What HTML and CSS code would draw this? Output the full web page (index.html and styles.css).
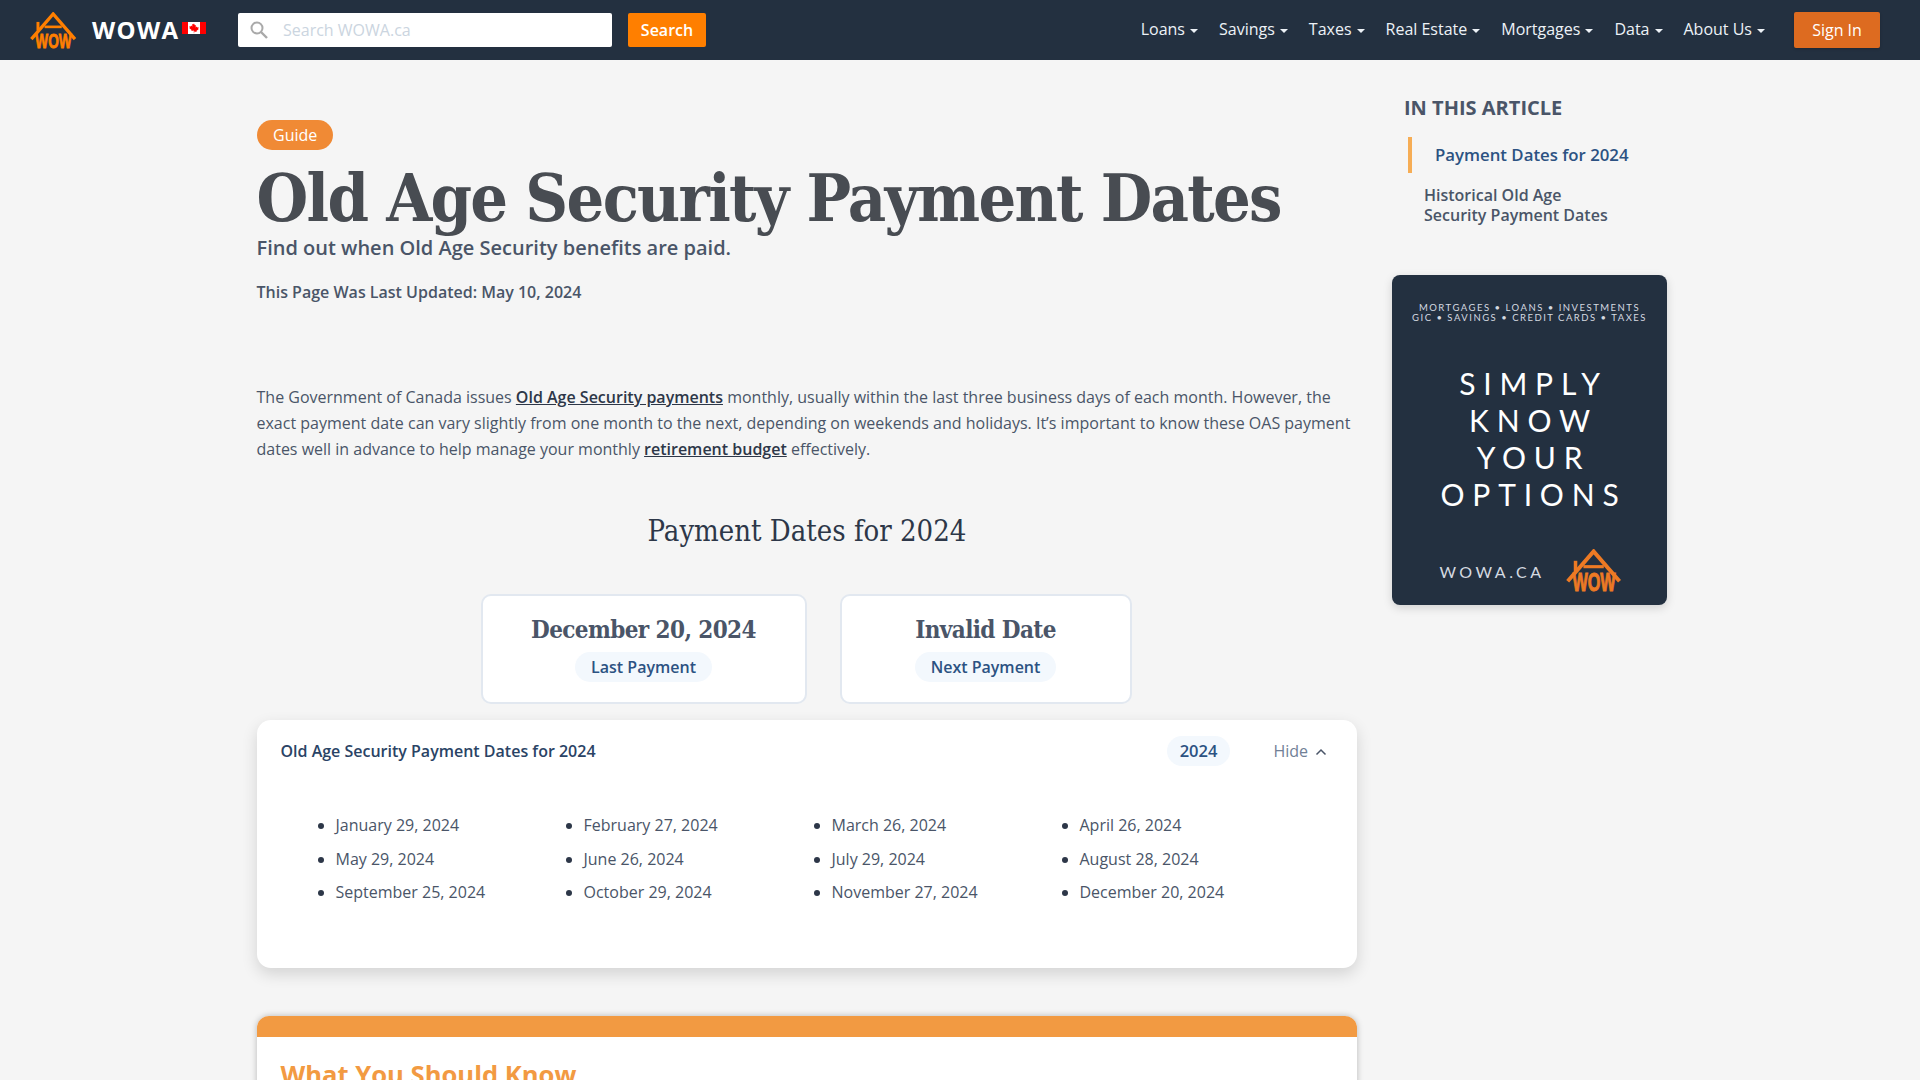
FILE: index.html
```html
<!DOCTYPE html>
<html lang="en">
<head>
<meta charset="utf-8">
<title>Old Age Security Payment Dates</title>
<link rel="stylesheet" href="styles.css">
</head>
<body>
<header class="topbar">
  <div class="brand">
    <svg class="brand-logo" width="47" height="37" viewBox="0 0 142 112">
      <path d="M4 82 L70 6 L136 82" fill="none" stroke="currentColor" stroke-width="10"/>
      <path d="M44 45 H96" fill="none" stroke="currentColor" stroke-width="8"/>
      <path d="M24 30 V56" fill="none" stroke="currentColor" stroke-width="9"/>
      <text x="16" y="108" class="logo-wow" textLength="110" lengthAdjust="spacingAndGlyphs">WOW</text>
    </svg>
    <span class="brand-name">WOWA</span>
    <svg class="flag" width="24" height="12" viewBox="0 0 24 12">
      <rect width="24" height="12" fill="#fff"/>
      <rect width="6" height="12" fill="#f00"/>
      <rect x="18" width="6" height="12" fill="#f00"/>
      <path d="M12 1.600l1 1.900 1-.5-.4 2.400 1.300-1 .4 1 1.400-.2-.5 1.500.6.4-2.400 1.900.2.900-2.400-.3v1.600h-.4V8.600l-2.400.3.2-.9-2.400-1.900.6-.4-.5-1.500 1.400.2.400-1 1.300 1-.4-2.400 1 .5z" fill="#f00"/>
    </svg>
  </div>
  <form class="search">
    <div class="search-box">
      <svg class="search-icon" width="20" height="20" viewBox="0 0 20 20">
        <circle cx="8" cy="8" r="5.500" fill="none" stroke="#a9a9a9" stroke-width="2"/>
        <path d="M12 12l6 6" stroke="#a9a9a9" stroke-width="2.400"/>
      </svg>
      <span class="search-placeholder">Search WOWA.ca</span>
    </div>
    <button class="search-btn" type="button">Search</button>
  </form>
  <nav class="nav">
    <a class="nav-item">Loans<i class="caret"></i></a>
    <a class="nav-item">Savings<i class="caret"></i></a>
    <a class="nav-item">Taxes<i class="caret"></i></a>
    <a class="nav-item">Real Estate<i class="caret"></i></a>
    <a class="nav-item">Mortgages<i class="caret"></i></a>
    <a class="nav-item">Data<i class="caret"></i></a>
    <a class="nav-item">About Us<i class="caret"></i></a>
  </nav>
  <button class="signin" type="button">Sign In</button>
</header>

<div class="page">
  <main class="article">
    <span class="tag">Guide</span>
    <h1 class="title">Old Age Security Payment Dates</h1>
    <p class="subtitle">Find out when Old Age Security benefits are paid.</p>
    <p class="updated">This Page Was Last Updated: May 10, 2024</p>
    <p class="intro">The Government of Canada issues <a class="link">Old Age Security payments</a> monthly, usually within the last three business days of each month. However, the exact payment date can vary slightly from one month to the next, depending on weekends and holidays. It’s important to know these OAS payment dates well in advance to help manage your monthly <a class="link">retirement budget</a> effectively.</p>
    <h2 class="section-title">Payment Dates for 2024</h2>
    <div class="stats">
      <div class="stat stat-last">
        <div class="stat-value">December 20, 2024</div>
        <span class="pill">Last Payment</span>
      </div>
      <div class="stat stat-next">
        <div class="stat-value">Invalid Date</div>
        <span class="pill">Next Payment</span>
      </div>
    </div>
    <section class="dates-card">
      <div class="dates-head">
        <span class="dates-title">Old Age Security Payment Dates for 2024</span>
        <span class="year-pill">2024</span>
        <span class="hide">Hide
          <svg class="chevron" width="12" height="8" viewBox="0 0 12 8"><path d="M1.500 6.500L6 2l4.500 4.500" fill="none" stroke="#4a5568" stroke-width="1.500"/></svg>
        </span>
      </div>
      <ul class="dates-list">
        <li>January 29, 2024</li>
        <li>February 27, 2024</li>
        <li>March 26, 2024</li>
        <li>April 26, 2024</li>
        <li>May 29, 2024</li>
        <li>June 26, 2024</li>
        <li>July 29, 2024</li>
        <li>August 28, 2024</li>
        <li>September 25, 2024</li>
        <li>October 29, 2024</li>
        <li>November 27, 2024</li>
        <li>December 20, 2024</li>
      </ul>
    </section>
    <section class="know-card">
      <div class="know-bar"></div>
      <h3 class="know-title">What You Should Know</h3>
    </section>
  </main>
  <aside class="side">
    <h4 class="toc-title">IN THIS ARTICLE</h4>
    <a class="toc-active">Payment Dates for 2024</a>
    <a class="toc-item">Historical Old Age Security Payment Dates</a>
    <div class="ad">
      <div class="ad-small">MORTGAGES • LOANS • INVESTMENTS<br>GIC • SAVINGS • CREDIT CARDS • TAXES</div>
      <div class="ad-big">SIMPLY<br>KNOW<br>YOUR<br>OPTIONS</div>
      <div class="ad-foot">
        <span class="ad-site">WOWA.CA</span>
        <svg class="ad-logo" width="56" height="44" viewBox="0 0 142 112">
          <path d="M4 82 L70 6 L136 82" fill="none" stroke="currentColor" stroke-width="10"/>
          <path d="M44 45 H96" fill="none" stroke="currentColor" stroke-width="8"/>
          <path d="M24 30 V56" fill="none" stroke="currentColor" stroke-width="9"/>
          <text x="16" y="108" class="logo-wow" textLength="110" lengthAdjust="spacingAndGlyphs">WOW</text>
        </svg>
      </div>
    </div>
  </aside>
</div>
</body>
</html>
```

FILE: styles.css
```css
* { box-sizing: border-box; }
html, body { margin: 0; padding: 0; }
body {
  height: 1080px;
  overflow: hidden;
  background: #f5f5f5;
  font-family: "Open Sans", "Noto Sans", sans-serif;
  font-size: 16px;
  color: #4a5568;
}
.logo-wow {
  font-family: "Liberation Sans", sans-serif; font-weight: 700; font-size: 64px;
  fill: currentColor; stroke: currentColor; stroke-width: 2.500px;
}

.topbar {
  height: 60px;
  background: #233040;
  display: flex;
  align-items: center;
  padding: 0 40px 0 30px;
  color: #fff;
}
.brand { display: flex; align-items: center; width: 208px; }
.brand-logo { display: block; color: #ff7f00; }
.brand-name { margin-left: 15px; font-size: 24px; font-weight: 700; letter-spacing: 1.300px; line-height: 60px; }
.flag { margin-left: 3px; margin-top: -4px; }
.search { display: flex; align-items: center; gap: 16px; }
.search-box {
  width: 374px; height: 34px; background: #fff; border-radius: 2px;
  display: flex; align-items: center; padding-left: 11px;
}
.search-placeholder { margin-left: 14px; color: #cbd5e0; font-size: 16px; }
.search-btn {
  width: 78px; height: 34px; border: 0; border-radius: 2px; background: #ff7f00; color: #fff;
  font: 600 16px "Open Sans", sans-serif; padding: 0;
}
.nav { margin-left: auto; display: flex; gap: 21px; margin-right: 29px; }
.nav-item { font-size: 16px; color: #edf2f7; display: flex; align-items: center; margin-top: -2px; }
.caret {
  display: inline-block; margin-left: 5px; margin-top: 3px;
  border-left: 4px solid transparent; border-right: 4px solid transparent; border-top: 4px solid #edf2f7;
}
.signin {
  width: 86px; height: 36px; border: 0; border-radius: 2px; background: #dd6b20; color: #fff;
  font: 400 16px "Open Sans", sans-serif; padding: 0; box-shadow: 0 1px 3px rgba(0,0,0,.2);
}

.page { display: flex; padding: 0 0 0 257px; }
.article { width: 1100px; padding-top: 60px; }
.tag {
  display: inline-block; height: 30px; line-height: 30px; padding: 0 16px; border-radius: 15px;
  background: #f08a35; color: #fff; font-size: 16px;
}
.title {
  margin: 9px 0 1px -.5px; font-family: "DejaVu Serif", "Liberation Serif", serif; font-stretch: condensed; font-weight: 700;
  font-size: 66px; line-height: 78px; letter-spacing: -1.700px; color: #484c52; white-space: nowrap;
}
.subtitle { margin: -5px 0 0 -.5px; font-size: 20px; font-weight: 600; line-height: 30px; }
.updated { margin: 17px 0 0 -.5px; font-weight: 600; line-height: 24px; }
.intro { margin: 80px 0 0 -.5px; line-height: 26px; color: #4a5568; }
.link { color: #2d3748; font-weight: 600; text-decoration: underline; }
.section-title {
  margin: 49px 0 0; text-align: center; font-family: "DejaVu Serif", "Liberation Serif", serif; font-stretch: condensed;
  font-weight: 400; font-size: 29px; line-height: 40px; color: #2d3748;
}
.stats { display: flex; justify-content: center; gap: 33px; margin-top: 43px; padding-right: 2px; }
.stat {
  height: 110px; background: #fff; border: 2px solid #e2e8f0; border-radius: 10px;
  display: flex; flex-direction: column; align-items: center; padding-top: 17px;
}
.stat-last { width: 326px; }
.stat-next { width: 292px; }
.stat-value {
  font-family: "DejaVu Serif", "Liberation Serif", serif; font-stretch: condensed; font-weight: 700;
  font-size: 24px; line-height: 34px; letter-spacing: -.6px; color: #4a5568;
}
.pill {
  margin-top: 5px; height: 30px; line-height: 30px; padding: 0 16px; border-radius: 15px;
  background: #f3f8fd; color: #2c5282; font-weight: 600; font-size: 16px;
}
.dates-card {
  margin-top: 16px; height: 248px; background: #fff; border-radius: 14px;
  box-shadow: 0 6px 16px rgba(0,0,0,.14); padding: 16px 30px 0 23.500px;
}
.dates-head { display: flex; align-items: center; height: 30px; }
.dates-title { font-weight: 600; color: #2a4365; }
.year-pill {
  margin-left: auto; height: 30px; line-height: 30px; padding: 0 13px; border-radius: 15px;
  background: #f3f8fd; color: #2c5282; font-weight: 600; font-size: 16.500px;
}
.hide { margin-left: 43px; color: #718096; display: flex; align-items: center; gap: 7px; }
.chevron { margin-top: 2px; }
.dates-list {
  list-style: disc; margin: 47px 0 0; padding: 0 0 0 55px;
  display: grid; grid-template-columns: repeat(4, 248px); row-gap: 9.500px; line-height: 24px;
}
.dates-list li { color: #4a5568; }
.dates-list li::marker { color: #2d3748; }
.know-card {
  margin-top: 48px; height: 200px; background: #fff; border-radius: 12px 12px 0 0; overflow: hidden;
  box-shadow: 0 0 6px rgba(0,0,0,.25);
}
.know-bar { height: 21px; background: #f29a42; }
.know-title { margin: 22px 0 0 23.500px; color: #f29a42; font-size: 25.600px; font-weight: 700; line-height: 32px; }

.side { width: 275px; margin-left: 35px; padding-top: 0; display: flex; flex-direction: column; }
.toc-title { margin: 35px 0 0 12px; font-size: 20px; font-weight: 700; line-height: 26px; color: #4a5568; }
.toc-active {
  display: block; margin: 16px 0 0 16px; padding-left: 23px; height: 36px; line-height: 36px;
  border-left: 4px solid #f6ad55; color: #2c5282; font-weight: 600; font-size: 16.800px; white-space: nowrap;
}
.toc-item { display: block; margin: 12px 0 0 32px; width: 200px; line-height: 20px; font-weight: 600; color: #4a5568; }
.ad {
  margin-top: 50px; height: 330px; background: #233040; border-radius: 8px;
  box-shadow: 0 3px 10px rgba(0,0,0,.15); color: #fff; text-align: center;
  display: flex; flex-direction: column; align-items: center;
  font-family: "Lato", sans-serif;
}
.ad-small { margin-top: 28px; font-size: 9.500px; line-height: 10px; letter-spacing: 1.500px; color: #d5dae0; }
.ad-big { margin-top: 42px; font-size: 30px; font-weight: 400; line-height: 37px; letter-spacing: 7.800px; padding-left: 8px; }
.ad-foot { margin-top: 36px; display: flex; align-items: center; gap: 21px; margin-left: 2px; }
.ad-site { font-size: 16px; letter-spacing: 3.500px; color: #d5dae0; }
.ad-logo { display: block; color: #ed7a24; }
```
